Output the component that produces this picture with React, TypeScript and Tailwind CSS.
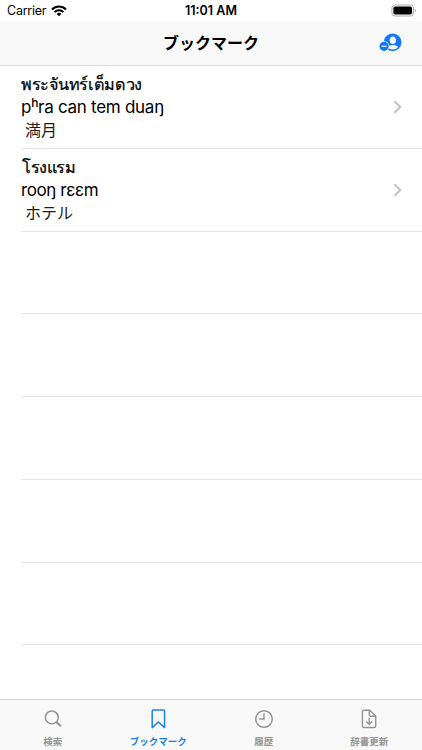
import type { ReactNode } from 'react';

interface Bookmark {
    thai: string;
    phonetic: ReactNode;
    meaning: string;
    thaiClass: string;
    phoneticClass: string;
}

const bookmarks: Bookmark[] = [
    {
        thai: 'พระจันทร์เต็มดวง',
        phonetic: (
            <>
                p<sup className="top-[-6px] text-[12px] leading-none font-medium">h</sup>ra can tem duaŋ
            </>
        ),
        meaning: '満月',
        thaiClass: 'text-[16.2px] tracking-[-0.3px]',
        phoneticClass: 'text-[17px] tracking-[-0.28px]',
    },
    {
        thai: 'โรงแรม',
        phonetic: 'rooŋ rɛɛm',
        meaning: 'ホテル',
        thaiClass: 'pl-[1px] text-[16.2px] tracking-[-0.5px]',
        phoneticClass: 'text-[17px] tracking-[-0.4px]',
    },
];

const emptyRows = [0, 1, 2, 3, 4];

function WifiIcon() {
    return (
        <svg width="16" height="12" viewBox="0 0 16 12" fill="none">
            <path d="M1 4.4a10 10 0 0 1 14 0" stroke="#000" strokeWidth="2.1" />
            <path d="M3.5 7.1a6.4 6.4 0 0 1 9 0" stroke="#000" strokeWidth="1.9" />
            <path d="M8 11.3 5.6 8.9a3.4 3.4 0 0 1 4.8 0Z" fill="#000" />
        </svg>
    );
}

function BatteryIcon() {
    return (
        <svg width="26" height="13" viewBox="0 0 26 13" fill="none">
            <rect x="0.9" y="1" width="21.6" height="11" rx="3" stroke="#aaa" />
            <rect x="2.4" y="2.5" width="18.6" height="8" rx="1.7" fill="#000" />
            <path d="M23.8 4.7v3.6c1.4-.7 1.4-2.9 0-3.6Z" fill="#999" />
        </svg>
    );
}

function AccountIcon() {
    return (
        <svg width="24" height="20" viewBox="0 0 24 20" fill="none">
            <circle cx="13.6" cy="9.3" r="8.8" fill="#1079f3" />
            <ellipse cx="13.8" cy="7.3" rx="3.1" ry="3.8" fill="#f8f8f8" />
            <path d="M8.4 13.9c.8-1.3 3-2 5.4-2s4.6.7 5.4 2a7 7 0 0 1-10.8 0Z" fill="#f8f8f8" />
            <circle cx="5.1" cy="13.3" r="5.2" fill="#f8f8f8" />
            <circle cx="5.1" cy="13.3" r="4.6" fill="#1079f3" />
            <path d="M2.6 13.3h5" stroke="#f8f8f8" strokeWidth="1.2" />
        </svg>
    );
}

function Chevron() {
    return (
        <svg width="9" height="14" viewBox="0 0 9 14" fill="none" className="shrink-0">
            <path d="m1.4 1.3 5.9 5.7-5.9 5.7" stroke="#c2c2c4" strokeWidth="2" />
        </svg>
    );
}

function SearchIcon() {
    return (
        <svg width="20" height="20" viewBox="0 0 20 20" fill="none" stroke="currentColor">
            <circle cx="8.8" cy="8.4" r="6.4" strokeWidth="1.5" />
            <path d="m13.3 12.9 4.7 4.3" strokeWidth="2.1" />
        </svg>
    );
}

function BookmarkIcon() {
    return (
        <svg width="20" height="20" viewBox="0 0 20 20" fill="none" stroke="currentColor">
            <path d="M4.2 2.3c0-.8.5-1.2 1.2-1.2h10c.7 0 1.2.4 1.2 1.2v16.3L10.4 13l-6.2 5.6Z" strokeWidth="1.5" strokeLinejoin="round" />
        </svg>
    );
}

function HistoryIcon() {
    return (
        <svg width="20" height="20" viewBox="0 0 20 20" fill="none" stroke="currentColor">
            <circle cx="10" cy="10" r="8.3" strokeWidth="1.5" />
            <path d="M10 4.3V10H5.3" strokeWidth="1.4" />
        </svg>
    );
}

function DownloadIcon() {
    return (
        <svg width="20" height="20" viewBox="0 0 20 20" fill="none" stroke="currentColor" strokeWidth="1.4" strokeLinejoin="round">
            <path d="M5 1.3h5.8l5.9 5.6v10c0 1-.6 1.6-1.6 1.6H5c-1 0-1.6-.6-1.6-1.6v-14c0-1 .6-1.6 1.6-1.6Z" />
            <path d="M10.3 1.5v4.4c0 .9.5 1.4 1.4 1.4h4.6" />
            <path d="M10.2 8.7v6.8M7.2 12.6l3 2.9 3-2.9" />
        </svg>
    );
}

const tabs = [
    { label: '検索', icon: <SearchIcon />, active: false },
    { label: 'ブックマーク', icon: <BookmarkIcon />, active: true },
    { label: '履歴', icon: <HistoryIcon />, active: false },
    { label: '辞書更新', icon: <DownloadIcon />, active: false },
];

function BookmarkRow({ bookmark }: { bookmark: Bookmark }) {
    return (
        <li className="flex h-[82.75px] items-center justify-between border-b border-[#e6e6e8] pr-[20px]">
            <div className="flex flex-col pt-[2px] whitespace-nowrap">
                <span
                    className={`h-[23px] leading-[22px] [-webkit-text-stroke:0.25px_#000] ${bookmark.thaiClass}`}
                >
                    {bookmark.thai}
                </span>
                <span className={`h-[23px] leading-[23px] ${bookmark.phoneticClass}`}>
                    {bookmark.phonetic}
                </span>
                <span className="h-[23px] pl-[4px] text-[16px] leading-[23px] text-[#1c1c1c]">
                    {bookmark.meaning}
                </span>
            </div>
            <Chevron />
        </li>
    );
}

export default function App() {
    return (
        <div className="flex h-[750px] w-[422px] flex-col overflow-hidden bg-white font-['Inter','Noto_Sans_CJK_JP',sans-serif] text-black">
            <div className="grid h-[21px] shrink-0 grid-cols-3 items-center pr-[5px] pl-[7px]">
                <div className="flex items-center gap-[5px] text-[12.5px] leading-[21px]">
                    <span className="tracking-[-0.25px]">Carrier</span>
                    <WifiIcon />
                </div>
                <span className="pr-[2px] text-center text-[12.5px] leading-[21px] font-semibold">
                    11:01 AM
                </span>
                <div className="flex justify-end">
                    <BatteryIcon />
                </div>
            </div>
            <header className="grid h-[45px] shrink-0 grid-cols-[1fr_auto_1fr] items-center border-b border-[#d8d8d8] bg-[#f8f8f8] pr-[19px] pl-[19px]">
                <h1 className="col-start-2 text-[16px] leading-6 font-bold">ブックマーク</h1>
                <button className="justify-self-end">
                    <AccountIcon />
                </button>
            </header>
            <ul className="flex-1 pl-[21px]">
                {bookmarks.map((bookmark) => (
                    <BookmarkRow key={bookmark.meaning} bookmark={bookmark} />
                ))}
                {emptyRows.map((row) => (
                    <li key={row} className="h-[82.75px] border-b border-[#e6e6e8]" />
                ))}
            </ul>
            <nav className="grid h-[51px] shrink-0 grid-cols-4 border-t border-[#d5d5d5] bg-[#f8f8f8]">
                {tabs.map((tab) => (
                    <button
                        key={tab.label}
                        className={`flex flex-col items-center gap-[6px] pt-[9px] text-[9.5px] leading-[14px] font-bold ${
                            tab.active ? 'text-[#1b7fe8]' : 'text-[#949494]'
                        }`}
                    >
                        {tab.icon}
                        <span>{tab.label}</span>
                    </button>
                ))}
            </nav>
        </div>
    );
}
